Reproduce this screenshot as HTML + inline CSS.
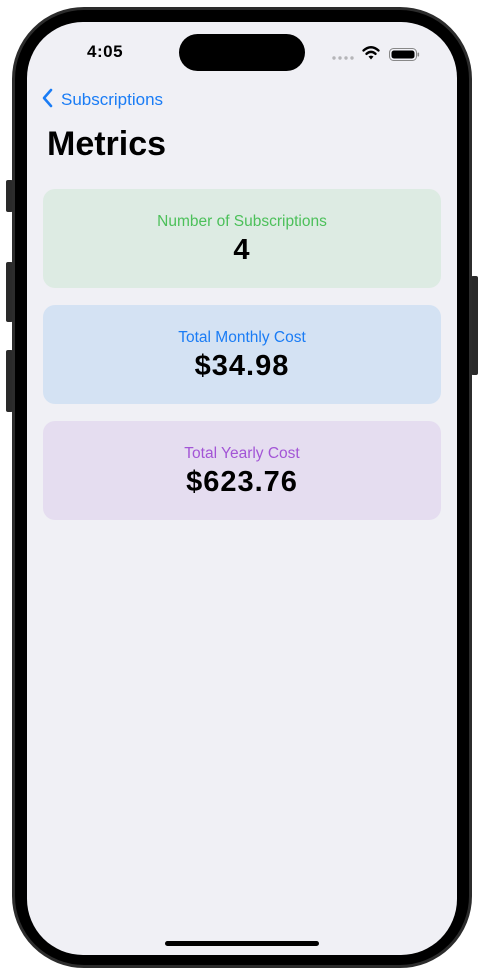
<!DOCTYPE html>
<html><head><meta charset="utf-8"><style>
*{margin:0;padding:0;box-sizing:border-box}
html,body{width:484px;height:973px;background:#fff;overflow:hidden;font-family:"Liberation Sans",sans-serif}
.btn{position:absolute;background:#2a2a2a;border-radius:2px}
.body{position:absolute;left:12px;top:7px;width:460px;height:961px;border-radius:72px;background:#000;border:3px solid #2c2c2c}
.screen{position:absolute;left:27px;top:22px;width:430px;height:933px;border-radius:56px;background:#f0f0f5;overflow:hidden}
.island{position:absolute;left:152px;top:12px;width:126px;height:37px;border-radius:19px;background:#000}
.time{position:absolute;left:60px;top:20px;font-size:17px;font-weight:bold;color:#000;letter-spacing:0.5px}
.back{position:absolute;left:14px;top:66px;color:#1a7cf5;font-size:17px}
.title{position:absolute;left:20px;top:103px;font-size:34px;font-weight:bold;color:#000}
.card{position:absolute;left:16px;width:398px;height:99px;border-radius:12px;text-align:center}
.card .l{position:absolute;top:24px;width:100%;font-size:15.5px}
.card .v{position:absolute;top:45px;width:100%;font-size:29px;font-weight:bold;color:#000;letter-spacing:1px}
.home{position:absolute;left:138px;top:919px;width:154px;height:5px;border-radius:3px;background:#000}
</style></head><body>
<div class="btn" style="left:6px;top:180px;width:7px;height:32px"></div>
<div class="btn" style="left:6px;top:262px;width:7px;height:60px"></div>
<div class="btn" style="left:6px;top:350px;width:7px;height:62px"></div>
<div class="btn" style="left:471px;top:276px;width:7px;height:99px"></div>
<div class="body"></div>
<div class="screen">
<div class="island"></div>
<div class="time">4:05</div>
<svg style="position:absolute;left:300px;top:20px" width="100" height="24" viewBox="0 0 100 24">
<g fill="#b5b5b8"><circle cx="7" cy="16" r="1.7"/><circle cx="13" cy="16" r="1.7"/><circle cx="19" cy="16" r="1.7"/><circle cx="25" cy="16" r="1.7"/></g>
<g fill="none" stroke="#000" stroke-width="2.4" stroke-linecap="round"><path d="M36.5 8.5 Q44 2 51.5 8.5"/><path d="M39.5 11.8 Q44 8 48.5 11.8"/></g>
<path d="M41.5 14.5 L44 17.5 L46.5 14.5 Q44 12.8 41.5 14.5Z" fill="#000"/>
<rect x="62.5" y="6.5" width="27" height="12" rx="4" fill="none" stroke="#888" stroke-width="1"/>
<rect x="64.5" y="8.5" width="23" height="8" rx="2.5" fill="#000"/>
<rect x="90.5" y="10.5" width="1.6" height="4" rx="0.8" fill="#888"/>
</svg>
<div class="back"><svg width="14" height="20" viewBox="0 0 14 20" style="vertical-align:-3px;margin-right:6px"><path d="M10 2 L3 10 L10 18" fill="none" stroke="#1a7cf5" stroke-width="2.6" stroke-linecap="round" stroke-linejoin="round"/></svg>Subscriptions</div>
<div class="title">Metrics</div>
<div class="card" style="top:167px;background:#ddebe3"><div class="l" style="color:#4cc05a">Number of Subscriptions</div><div class="v">4</div></div>
<div class="card" style="top:283px;background:#d4e2f3"><div class="l" style="color:#1a7cf5">Total Monthly Cost</div><div class="v">$34.98</div></div>
<div class="card" style="top:399px;background:#e5ddf0"><div class="l" style="color:#a355d6">Total Yearly Cost</div><div class="v">$623.76</div></div>
<div class="home"></div>
</div>
</body></html>
